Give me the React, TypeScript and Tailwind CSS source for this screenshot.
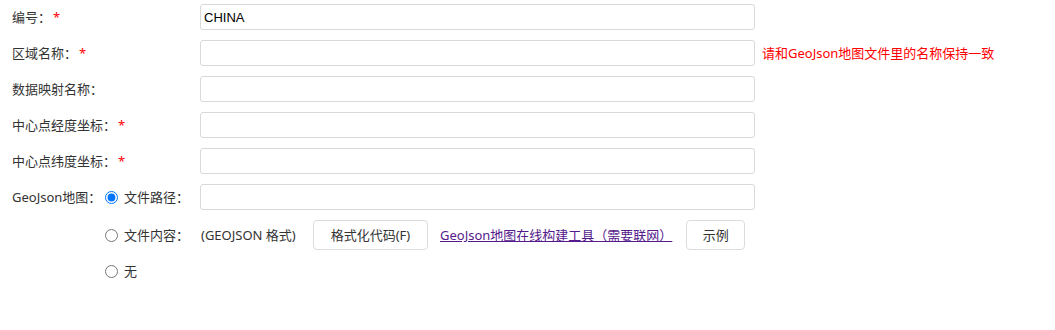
import React, { useState } from 'react';

const font = { fontFamily: '"Noto Sans", "Noto Sans CJK SC", sans-serif' };

const inputCls =
  'w-[555px] h-[26px] border border-[#d9d9d9] rounded-[3px] bg-white px-[3px] text-[13px] text-black outline-none';

const Required = () => <span className="text-[#ff0000] ml-[2px]">*</span>;

const Row: React.FC<{ label: string; required?: boolean; value?: string; children?: React.ReactNode }> = ({
  label,
  required,
  value,
  children,
}) => (
  <div className="flex items-center h-[26px]">
    <div className="w-[188px] shrink-0 flex items-center">
      {label}
      {required && <Required />}
    </div>
    <input
      type="text"
      defaultValue={value}
      className={inputCls}
      style={{ fontFamily: '"Liberation Sans", Arial, sans-serif' }}
    />
    {children}
  </div>
);

export default function App() {
  const [mode, setMode] = useState('path');

  return (
    <div className="bg-white w-[1055px] h-[330px] pl-3 pt-[4px] text-[13px] leading-[20px] text-[#333]" style={font}>
      <div className="flex flex-col gap-[10px]">
        <Row label="编号：" required value="CHINA" />
        <Row label="区域名称：" required>
          <span className="ml-[7px] text-[#ff0000]">请和GeoJson地图文件里的名称保持一致</span>
        </Row>
        <Row label="数据映射名称：" />
        <Row label="中心点经度坐标：" required />
        <Row label="中心点纬度坐标：" required />

        <div className="flex items-center h-[26px]">
          <span className="w-[93px] shrink-0">GeoJson地图：</span>
          <input
            type="radio"
            name="geo"
            checked={mode === 'path'}
            onChange={() => setMode('path')}
            className="w-[13px] h-[13px] m-0 mr-[6px]"
          />
          <span className="w-[76px] shrink-0">文件路径：</span>
          <input type="text" className={inputCls} />
        </div>

        <div className="flex items-center h-[30px] pl-[93px]">
          <input
            type="radio"
            name="geo"
            checked={mode === 'content'}
            onChange={() => setMode('content')}
            className="w-[13px] h-[13px] m-0 mr-[6px]"
          />
          <span className="w-[77px] shrink-0">文件内容：</span>
          <span className="w-[112px] shrink-0">(GEOJSON 格式)</span>
          <button className="w-[115px] h-[30px] border border-[#dcdcdc] rounded-[4px] bg-white text-[#333]">
            格式化代码(F)
          </button>
          <a href="#" className="ml-[12px] text-[#551a8b] underline">
            GeoJson地图在线构建工具（需要联网）
          </a>
          <button className="ml-[14px] w-[59px] h-[30px] border border-[#dcdcdc] rounded-[4px] bg-white text-[#333]">
            示例
          </button>
        </div>

        <div className="flex items-center h-[22px] pl-[93px]">
          <input
            type="radio"
            name="geo"
            checked={mode === 'none'}
            onChange={() => setMode('none')}
            className="w-[13px] h-[13px] m-0 mr-[6px]"
          />
          <span>无</span>
        </div>
      </div>
    </div>
  );
}
